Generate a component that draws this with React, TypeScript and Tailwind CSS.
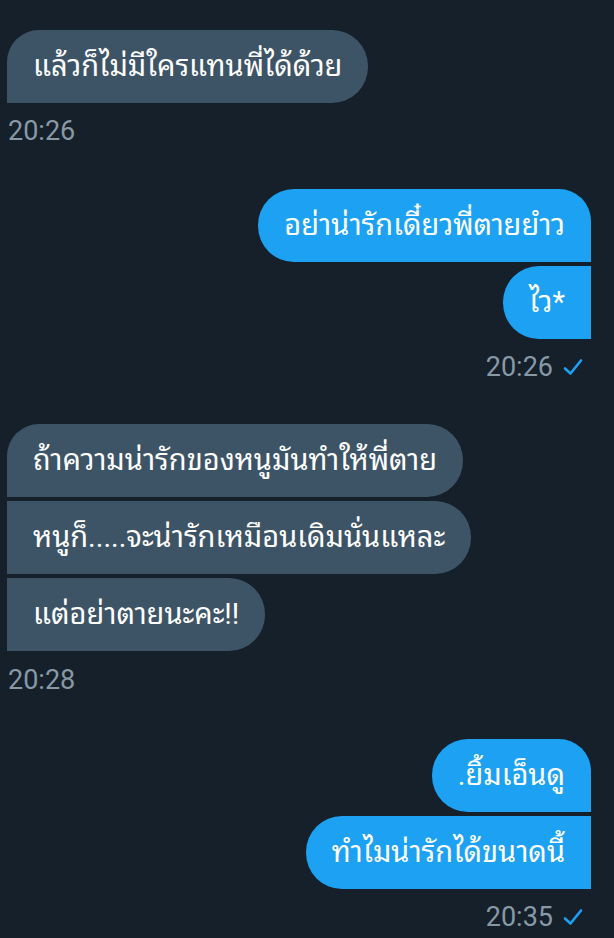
import React from "react";

function Check() {
  return (
    <svg width="20" height="18" viewBox="0 0 20 18" className="ml-[10px]">
      <path d="M2 10.5 L7.5 15.5 L18 2.5" fill="none" stroke="#1da1f2" strokeWidth="2.6" strokeLinecap="round" strokeLinejoin="round" />
    </svg>
  );
}

function Recv({ text, cls }: { text: string; cls: string }) {
  return (
    <div className={`self-start h-[73px] flex items-center px-[26px] bg-[#3d5466] text-white text-[29px] ${cls}`}>
      {text}
    </div>
  );
}

function Sent({ text, cls }: { text: string; cls: string }) {
  return (
    <div className={`self-end h-[73px] flex items-center px-[26px] bg-[#1da1f2] text-white text-[29px] ${cls}`}>
      {text}
    </div>
  );
}

function Time({ t, sent }: { t: string; sent?: boolean }) {
  return (
    <div className={`flex items-center h-[36px] text-[27px] text-[#8899a6] ${sent ? "mr-[8px]" : "ml-[1px]"}`}>
      {t}
      {sent && <Check />}
    </div>
  );
}

export default function App() {
  return (
    <div className="w-[614px] h-[938px] bg-[#15202b] overflow-hidden flex flex-col pl-[7px] pr-[23px] pt-[30px] font-['Roboto','Noto_Sans_Thai_Looped',sans-serif]">
      <div className="flex flex-col">
        <Recv text="แล้วก็ไม่มีใครแทนพี่ได้ด้วย" cls="rounded-tl-[32px] rounded-r-[36px]" />
      </div>
      <div className="mt-[10px] self-start"><Time t="20:26" /></div>
      <div className="flex flex-col gap-[4px] mt-[40px]">
        <Sent text="อย่าน่ารักเดี๋ยวพี่ตายยำว" cls="rounded-tr-[32px] rounded-l-[36px]" />
        <Sent text="ไว*" cls="rounded-l-[36px]" />
      </div>
      <div className="mt-[10px] self-end"><Time t="20:26" sent /></div>
      <div className="flex flex-col gap-[4px] mt-[39px]">
        <Recv text="ถ้าความน่ารักของหนูมันทำให้พี่ตาย" cls="rounded-tl-[32px] rounded-r-[36px]" />
        <Recv text="หนูก็.....จะน่ารักเหมือนเดิมนั่นแหละ" cls="rounded-r-[36px]" />
        <Recv text="แต่อย่าตายนะคะ!!" cls="rounded-r-[36px]" />
      </div>
      <div className="mt-[11px] self-start"><Time t="20:28" /></div>
      <div className="flex flex-col gap-[4px] mt-[41px]">
        <Sent text=".ยิ้มเอ็นดู" cls="rounded-tr-[32px] rounded-l-[36px]" />
        <Sent text="ทำไมน่ารักได้ขนาดนี้" cls="rounded-l-[36px]" />
      </div>
      <div className="mt-[10px] self-end"><Time t="20:35" sent /></div>
    </div>
  );
}
